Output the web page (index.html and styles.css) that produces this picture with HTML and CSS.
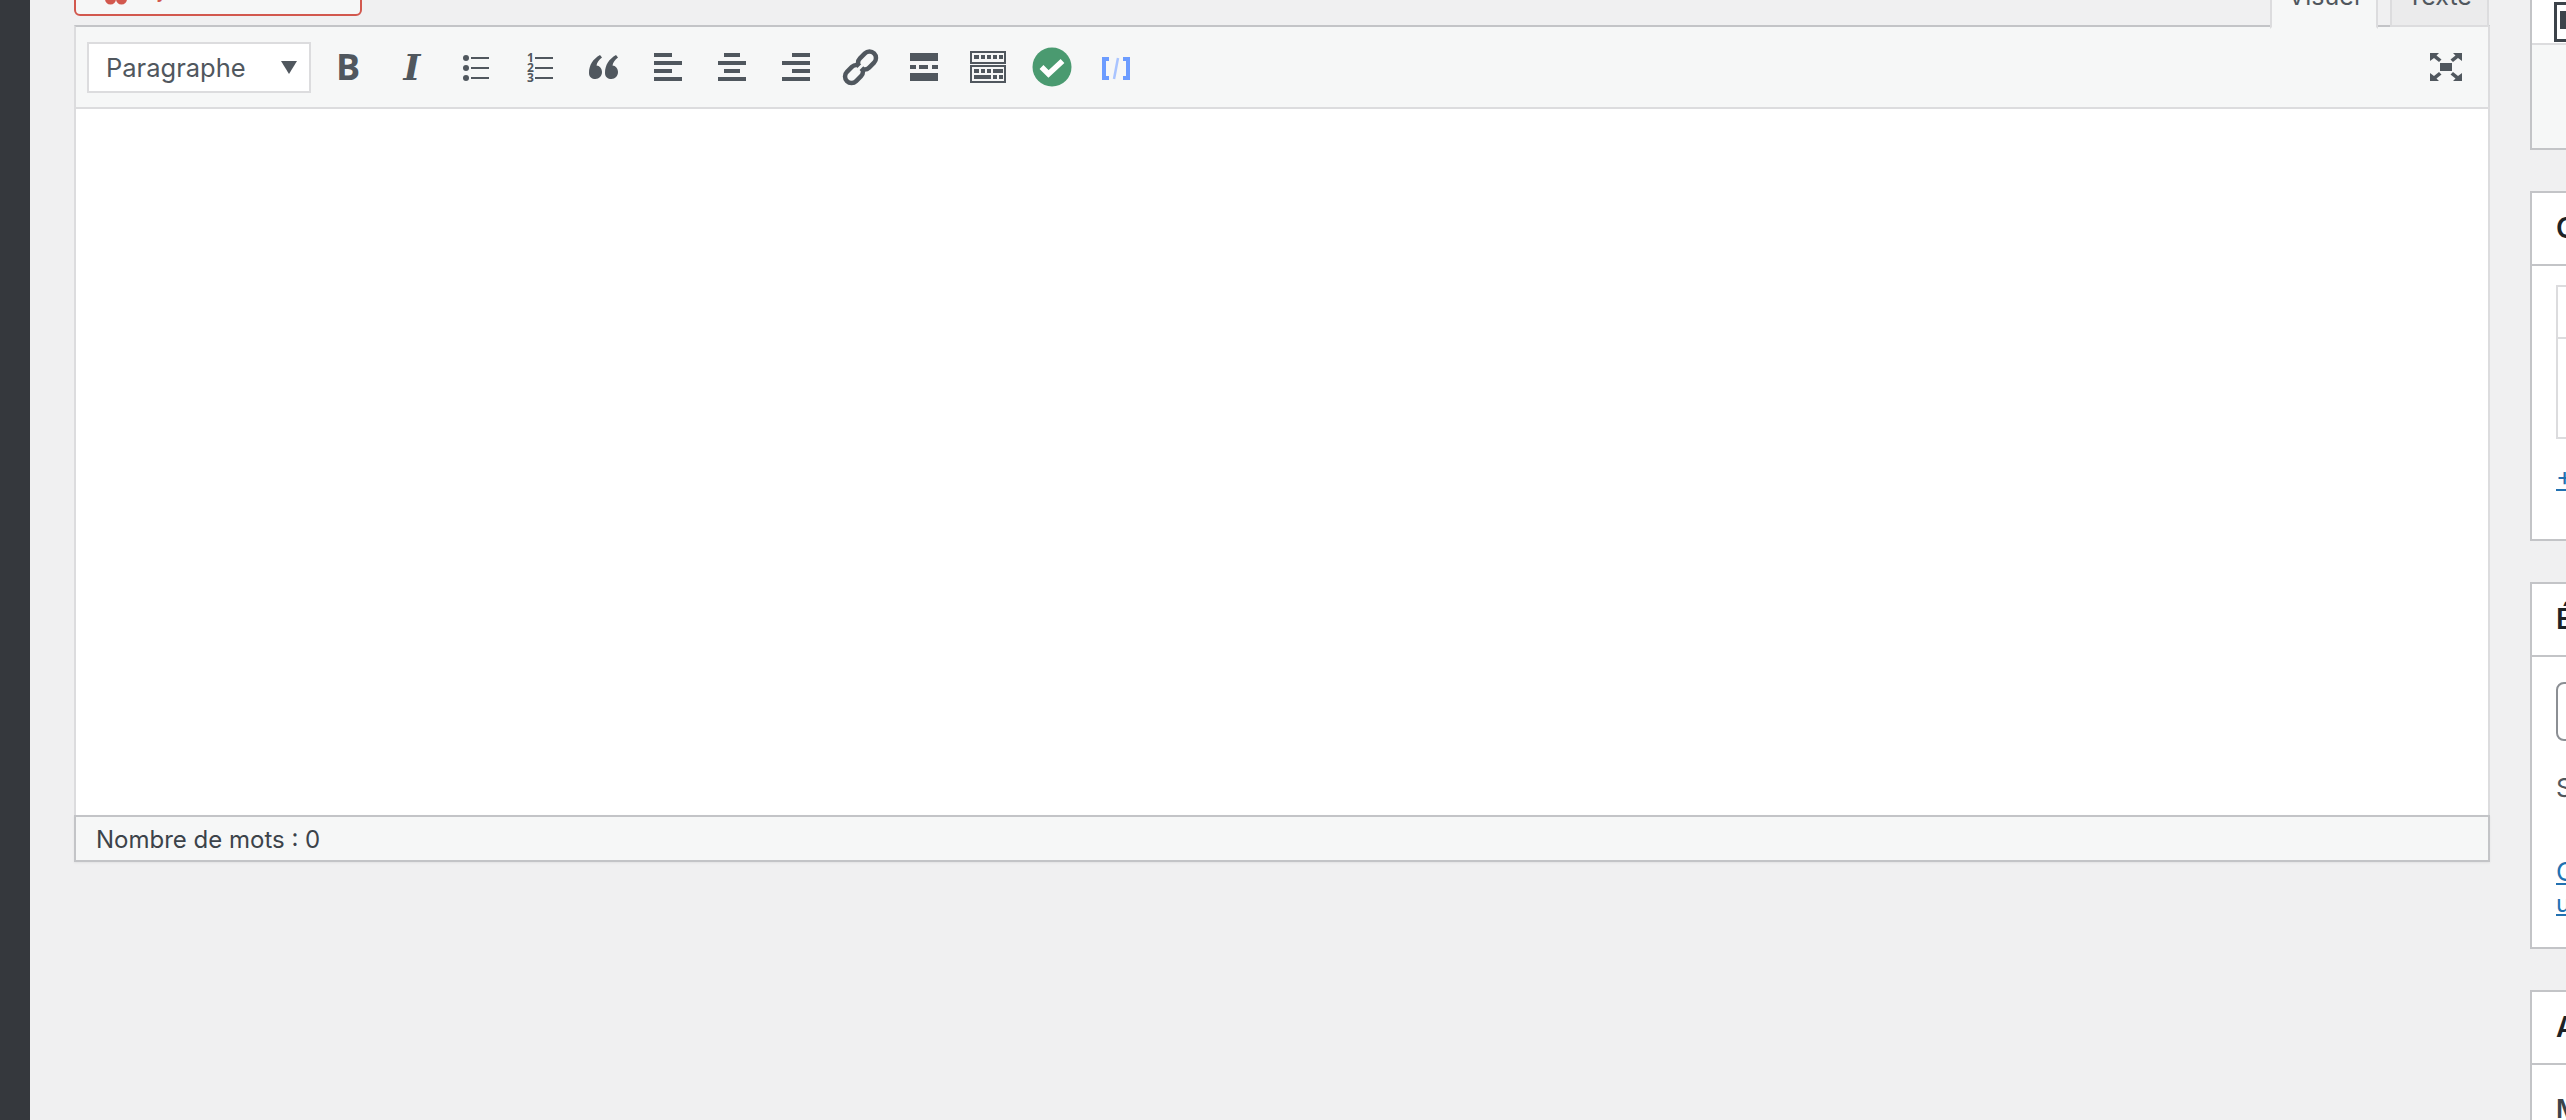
FILE: index.html
```html
<!DOCTYPE HTML>
<html>
	<head>
		<title>Modifier l'article</title>
		<meta charset="utf-8" />
		<link rel="stylesheet" href="styles.css">
	</head>
	<body>
		<div class="admin-menu"></div>

		<div class="content">
			<div class="main-col">
				<div class="editor-head">
					<div class="media-btn">
						<svg class="media-icon" width="22" height="12" viewBox="0 0 22 12"><circle cx="5.500" cy="6" r="5.500"/><circle cx="16.500" cy="6" r="5.500"/></svg>
						<span>Ajouter un média</span>
					</div>
					<div class="tabs">
						<div class="tab active">Visuel</div>
						<div class="tab">Texte</div>
					</div>
				</div>

				<div class="editor">
					<div class="toolbar">
						<div class="format-select">
							<span>Paragraphe</span>
							<i class="select-arrow"></i>
						</div>
						<div class="btn"><span class="glyph-b">B</span></div>
						<div class="btn"><span class="glyph-i">I</span></div>
						<div class="btn">
							<svg viewBox="0 0 40 40"><circle cx="10" cy="11" r="3"/><circle cx="10" cy="21" r="3"/><circle cx="10" cy="31" r="3"/><rect x="15" y="10" width="18" height="2"/><rect x="15" y="20" width="18" height="2"/><rect x="15" y="30" width="18" height="2"/></svg>
						</div>
						<div class="btn">
							<svg viewBox="0 0 40 40"><text class="num" x="7" y="15">1</text><text class="num" x="7" y="25">2</text><text class="num" x="7" y="35">3</text><rect x="15" y="10" width="18" height="2"/><rect x="15" y="20" width="18" height="2"/><rect x="15" y="30" width="18" height="2"/></svg>
						</div>
						<div class="btn">
							<svg viewBox="0 0 40 40"><path d="M5 26c0-8 4-14 11-18l2 2.500c-3 2-5 5-5.500 8 3 .2 5.500 3 5.500 6.500 0 4-3 7-6.500 7S5 30 5 26z"/><path d="M21 26c0-8 4-14 11-18l2 2.500c-3 2-5 5-5.500 8 3 .2 5.500 3 5.500 6.500 0 4-3 7-6.500 7S21 30 21 26z"/></svg>
						</div>
						<div class="btn">
							<svg viewBox="0 0 40 40"><rect x="6" y="6" width="18" height="4"/><rect x="6" y="14" width="28" height="4"/><rect x="6" y="22" width="18" height="4"/><rect x="6" y="30" width="28" height="4"/></svg>
						</div>
						<div class="btn">
							<svg viewBox="0 0 40 40"><rect x="12" y="6" width="16" height="4"/><rect x="6" y="14" width="28" height="4"/><rect x="12" y="22" width="16" height="4"/><rect x="6" y="30" width="28" height="4"/></svg>
						</div>
						<div class="btn">
							<svg viewBox="0 0 40 40"><rect x="16" y="6" width="18" height="4"/><rect x="6" y="14" width="28" height="4"/><rect x="16" y="22" width="18" height="4"/><rect x="6" y="30" width="28" height="4"/></svg>
						</div>
						<div class="btn">
							<svg viewBox="0 0 40 40"><g fill="none" stroke="#50575e" stroke-width="4.500"><rect x="4" y="20.500" width="20" height="13" rx="6.500" transform="rotate(-45 14 27)"/><rect x="17" y="7" width="20" height="13" rx="6.500" transform="rotate(-45 27 13.500)"/></g><path d="M15 25.500l11-11" stroke="#f6f7f7" stroke-width="3"/></svg>
						</div>
						<div class="btn">
							<svg viewBox="0 0 40 40"><rect x="6" y="6" width="28" height="8"/><rect x="6" y="18" width="6" height="4"/><rect x="15" y="18" width="9" height="4"/><rect x="28" y="18" width="6" height="4"/><rect x="6" y="26" width="28" height="8"/></svg>
						</div>
						<div class="btn">
							<svg viewBox="0 0 40 40"><rect x="3" y="5" width="34" height="11" fill="none" stroke="#50575e" stroke-width="2"/><rect x="3" y="19" width="34" height="16" fill="none" stroke="#50575e" stroke-width="2"/><rect x="6" y="8" width="5" height="4"/><rect x="13" y="8" width="4" height="4"/><rect x="19" y="8" width="4" height="4"/><rect x="25" y="8" width="4" height="4"/><rect x="31" y="8" width="4" height="4"/><rect x="6" y="22" width="5" height="4"/><rect x="13" y="22" width="4" height="4"/><rect x="19" y="22" width="4" height="4"/><rect x="25" y="22" width="10" height="4"/><rect x="6" y="28" width="17" height="4"/><rect x="25" y="28" width="4" height="4"/><rect x="31" y="28" width="4" height="4"/></svg>
						</div>
						<div class="btn">
							<svg class="soft" viewBox="0 0 40 40"><circle cx="20" cy="20" r="19.500" fill="#4a9a70"/><path d="M9.500 20l7 7L30.500 14" fill="none" stroke="#fff" stroke-width="5.500"/></svg>
						</div>
						<div class="btn">
							<svg class="soft" viewBox="0 0 40 40"><path d="M13 12H8v19h5M27 12h5v19h-5" fill="none" stroke="#6c9cff" stroke-width="4"/><path d="M22 11l-4 21" stroke="#a9c4ff" stroke-width="2.500"/></svg>
						</div>
						<div class="btn btn-right">
							<svg viewBox="0 0 40 40"><rect x="14" y="16" width="12" height="8"/><path d="M4 6h9l-2.500 2.500 5 4-2.500 2.500-5-4L4 14z"/><path d="M36 6h-9l2.500 2.500-5 4 2.500 2.500 5-4 4 3z"/><path d="M4 34h9l-2.500-2.500 5-4-2.500-2.500-5 4L4 26z"/><path d="M36 34h-9l2.500-2.500-5-4 2.500-2.500 5 4 4-3z"/></svg>
						</div>
					</div>
					<div class="editor-body"></div>
					<div class="status-bar">Nombre de mots : 0</div>
				</div>
			</div>

			<div class="side-col">
				<div class="box box-publish">
					<div class="publish-top">
						<div class="calendar-icon"><i></i></div>
					</div>
					<div class="publish-bottom"></div>
				</div>

				<div class="box box-cats">
					<h2>Catégories</h2>
					<div class="box-inner">
						<div class="cat-table">
							<div class="cat-tab"></div>
							<div class="cat-list"></div>
						</div>
						<a class="add-link" href="#">+ Ajouter une catégorie</a>
					</div>
				</div>

				<div class="box box-tags">
					<h2>Étiquettes</h2>
					<div class="box-inner">
						<div class="tag-input"></div>
						<p class="hint">Séparez les étiquettes par des virgules</p>
						<a class="tag-link" href="#">Choisir parmi les</a>
						<a class="tag-link small" href="#">utilisées</a>
					</div>
				</div>

				<div class="box box-attrs">
					<h2>Attributs</h2>
					<div class="box-inner">
						<p class="attr-label">Modèle</p>
					</div>
				</div>
			</div>
		</div>
	</body>
</html>
```

FILE: styles.css
```css
html, body {
	height: 100%;
}

body {
	background: #f0f0f1;
	margin: 0;
	padding: 0;
	font-family: Inter, "Liberation Sans", sans-serif;
	color: #3c434a;
	display: flex;
	overflow: hidden;
}

.admin-menu {
	width: 30px;
	flex: none;
	background: #35383d;
}

.content {
	flex: none;
	display: flex;
	align-items: flex-start;
	gap: 40px;
	margin-left: 44px;
	margin-top: -60px;
}

.main-col {
	width: 2416px;
}

/* row above the editor, scrolled mostly out of view */
.editor-head {
	display: flex;
	justify-content: space-between;
	align-items: flex-start;
	height: 85px;
}

.media-btn {
	width: 288px;
	height: 76px;
	box-sizing: border-box;
	border: 2px solid #d2584e;
	border-radius: 6px;
	background: #f6f7f7;
	color: #d2584e;
	font-size: 26px;
	display: flex;
	align-items: flex-end;
	gap: 13px;
	padding: 0 0 11px 29px;
}

.media-icon {
	fill: #d2584e;
	flex: none;
	margin-bottom: -2px;
}

.tabs {
	display: flex;
	gap: 12px;
	margin-right: 1px;
	height: 87px;
	align-items: flex-end;
	position: relative;
	z-index: 1;
}

.tab {
	box-sizing: border-box;
	width: 99px;
	height: 60px;
	padding-top: 11px;
	text-align: center;
	font-size: 25px;
	line-height: 32px;
	color: #50575e;
	background: #ebebec;
	border: 2px solid #dcdcde;
}

.tab.active {
	width: 108px;
	background: #f6f7f7;
	border-bottom-color: #f6f7f7;
	height: 62px;
	margin-bottom: -2px;
}

.editor {
	border: 2px solid #dcdcde;
	border-top-color: #c3c4c7;
	border-bottom: 0;
}

.toolbar {
	height: 80px;
	background: #f6f7f7;
	border-bottom: 2px solid #dcdcde;
	display: flex;
	align-items: center;
	padding-left: 11px;
	gap: 4px;
}

.format-select {
	width: 224px;
	height: 51px;
	box-sizing: border-box;
	background: #fff;
	border: 2px solid #dcdcde;
	margin-right: 3px;
	padding: 0 12px 0 17px;
	display: flex;
	align-items: center;
	justify-content: space-between;
	font-size: 25.500px;
	color: #50575e;
}

.select-arrow {
	border-left: 8px solid transparent;
	border-right: 8px solid transparent;
	border-top: 13px solid #50575e;
}

.btn {
	width: 60px;
	height: 60px;
	flex: none;
	display: flex;
	align-items: center;
	justify-content: center;
}

.btn svg {
	width: 40px;
	height: 40px;
	fill: #50575e;
	overflow: visible;
}

.btn-right {
	margin-left: auto;
	margin-right: 12px;
}

.soft {
	filter: blur(0.6px);
}

.glyph-b {
	font-family: "Open Sans", sans-serif;
	font-weight: 700;
	font-size: 36px;
	line-height: 40px;
	color: #50575e;
}

.glyph-i {
	font-family: "DejaVu Serif", serif;
	font-weight: 700;
	font-style: italic;
	font-size: 36px;
	line-height: 40px;
	color: #50575e;
}

.num {
	font-family: "Open Sans", sans-serif;
	font-weight: 700;
	font-size: 12px;
}

.editor-body {
	height: 706px;
	background: #fff;
}

.status-bar {
	height: 43px;
	margin: 0 -2px;
	background: #f6f7f7;
	border: 2px solid #c3c4c7;
	box-shadow: 0 1px 2px rgba(0, 0, 0, 0.06);
	padding-left: 20px;
	font-size: 24px;
	line-height: 46px;
	color: #3c434a;
}

.side-col {
	width: 560px;
	display: flex;
	flex-direction: column;
	gap: 41px;
	margin-top: -41px;
}

.box {
	box-sizing: border-box;
	background: #fff;
	border: 2px solid #c3c4c7;
}

.box h2 {
	margin: 0;
	height: 71px;
	padding-left: 24px;
	border-bottom: 2px solid #c3c4c7;
	font-size: 28px;
	font-weight: 600;
	line-height: 70px;
	color: #1d2327;
}

.box-inner {
	padding: 18px 24px;
}

.publish-top {
	height: 144px;
	padding: 101px 0 0 22px;
	box-sizing: border-box;
	border-bottom: 2px solid #dcdcde;
}

.calendar-icon {
	width: 40px;
	height: 40px;
	box-sizing: border-box;
	border: 3px solid #3c434a;
	padding: 6px 0 0 3px;
}

.calendar-icon i {
	display: block;
	width: 10px;
	height: 18px;
	background: #3c434a;
}

.publish-bottom {
	height: 103px;
	background: #f6f7f7;
}

.box-cats .box-inner {
	padding-top: 19px;
	padding-bottom: 45px;
}

.box-tags .box-inner {
	padding-bottom: 27px;
}

.cat-table {
	border: 2px solid #dcdcde;
	height: 150px;
	display: flex;
	flex-direction: column;
}

.cat-tab {
	height: 50px;
	border-bottom: 2px solid #dcdcde;
}

.add-link, .tag-link {
	display: block;
	color: #2271b1;
	font-size: 26px;
	line-height: 32px;
	text-decoration: underline;
}

.add-link {
	margin-top: 23px;
}

.tag-input {
	width: 340px;
	height: 59px;
	box-sizing: border-box;
	border: 2px solid #8c8f94;
	border-radius: 8px;
	margin-top: 7px;
}

.hint {
	margin: 31px 0 52px;
	font-size: 26px;
	line-height: 32px;
	color: #50575e;
}

.tag-link.small {
	font-size: 24px;
}

.attr-label {
	margin: 10px 0;
	font-size: 26px;
	font-weight: 600;
	color: #3c434a;
}
```
